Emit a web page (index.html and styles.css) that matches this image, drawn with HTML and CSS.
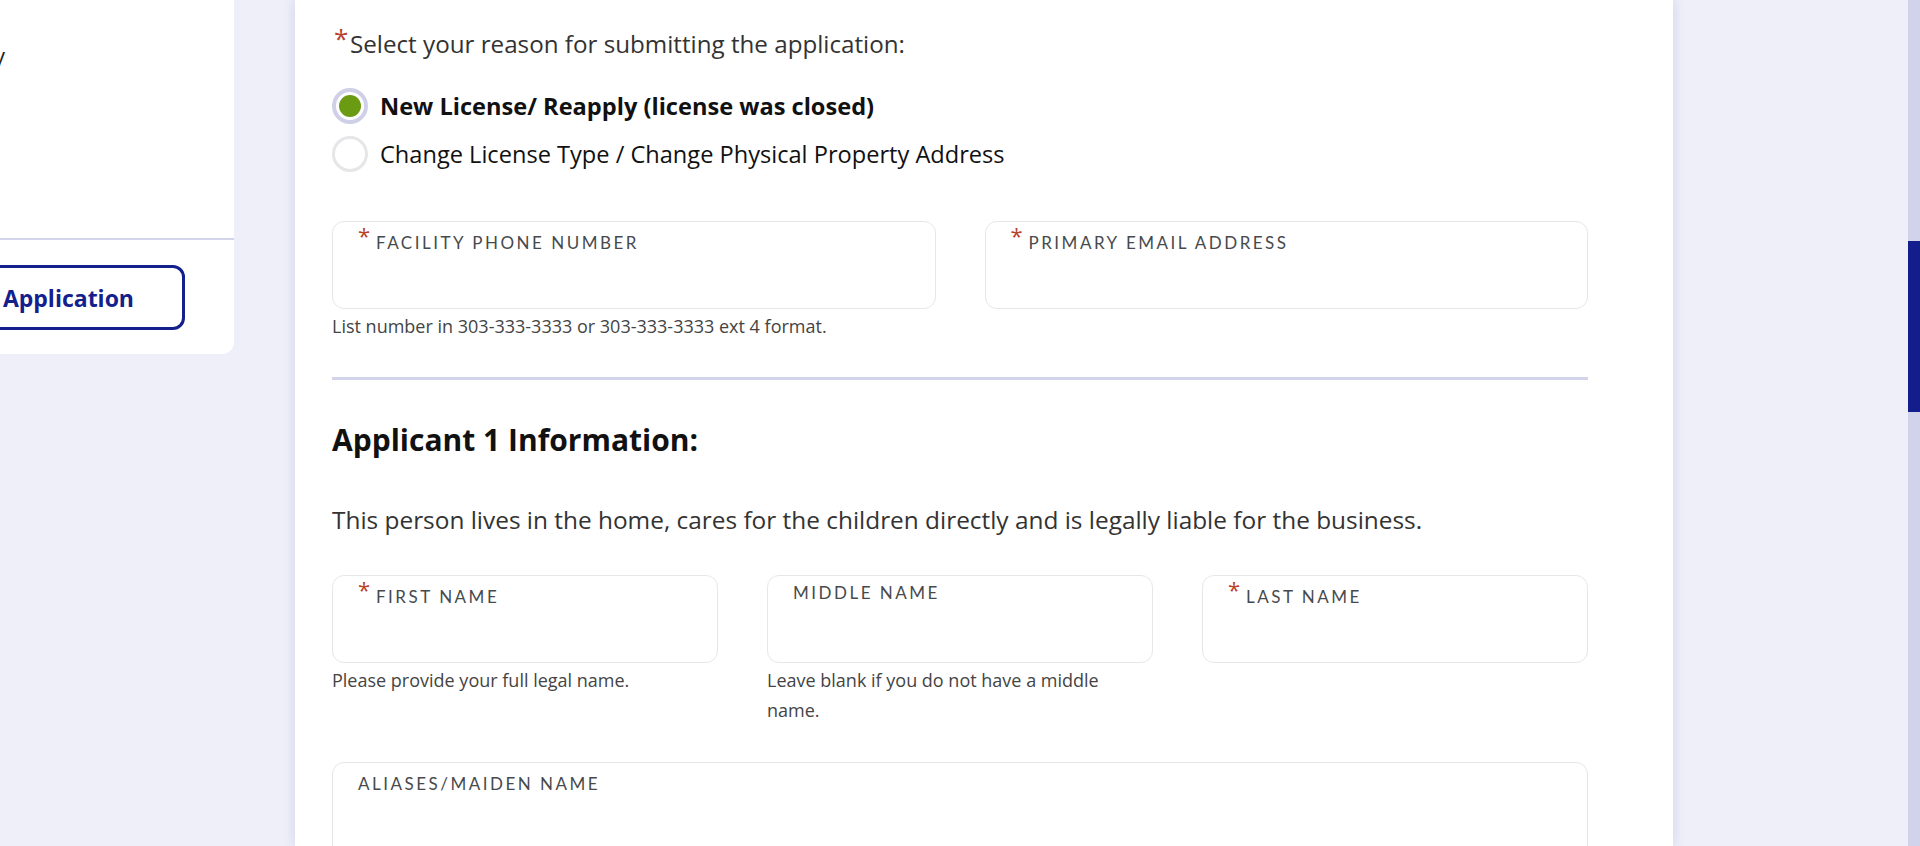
FILE: index.html
```html
<!DOCTYPE html>
<html lang="en">
<head>
<meta charset="utf-8">
<title>Application</title>
<link rel="stylesheet" href="styles.css">
</head>
<body>
<div class="page">
  <aside class="sidebar">
    <div class="side-nav">
      <div class="side-item"><span>Facility</span></div>
    </div>
    <div class="side-actions">
      <div class="btn-wrap"><button class="btn-outline" type="button">Start New Application</button></div>
    </div>
  </aside>

  <main class="card">
    <div class="question"><span class="ast">*</span><span>Select your reason for submitting the application:</span></div>
    <div class="radios">
      <label class="radio-row selected"><span class="radio"><span class="dot"></span></span><span class="rlabel">New License/ Reapply (license was closed)</span></label>
      <label class="radio-row"><span class="radio"></span><span class="rlabel">Change License Type / Change Physical Property Address</span></label>
    </div>

    <div class="row two">
      <div class="col">
        <div class="field"><div class="flabel req"><span class="ast">*</span><span class="ftext">Facility Phone Number</span></div></div>
        <div class="help">List number in 303-333-3333 or 303-333-3333 ext 4 format.</div>
      </div>
      <div class="col">
        <div class="field"><div class="flabel req"><span class="ast">*</span><span class="ftext">Primary Email Address</span></div></div>
      </div>
    </div>

    <hr class="divider">

    <h2 class="heading">Applicant 1 Information:</h2>
    <p class="intro">This person lives in the home, cares for the children directly and is legally liable for the business.</p>

    <div class="row three">
      <div class="col">
        <div class="field"><div class="flabel req"><span class="ast">*</span><span class="ftext">First Name</span></div></div>
        <div class="help">Please provide your full legal name.</div>
      </div>
      <div class="col">
        <div class="field"><div class="flabel"><span class="ftext">Middle Name</span></div></div>
        <div class="help">Leave blank if you do not have a middle name.</div>
      </div>
      <div class="col">
        <div class="field"><div class="flabel req"><span class="ast">*</span><span class="ftext">Last Name</span></div></div>
      </div>
    </div>

    <div class="field wide"><div class="flabel"><span class="ftext">Aliases/Maiden Name</span></div></div>
  </main>

  <div class="spacer"></div>
  <div class="scrollbar"><div class="thumb"></div></div>
</div>
</body>
</html>
```

FILE: styles.css
```css
html, body {
  margin: 0;
  padding: 0;
  height: 846px;
  overflow: hidden;
}
body {
  background: #eeeff9;
  font-family: "Open Sans", "Lato", sans-serif;
  color: #333;
}
.page {
  display: flex;
  align-items: stretch;
  height: 846px;
}

/* sidebar */
.sidebar {
  width: 234px;
  flex-shrink: 0;
  align-self: flex-start;
  height: 354px;
  background: #fff;
  border-radius: 0 0 12px 0;
  overflow: hidden;
  display: flex;
  flex-direction: column;
}
.side-nav {
  height: 238px;
  border-bottom: 2px solid #d3d4ea;
}
.side-item {
  width: 5px;
  display: flex;
  justify-content: flex-end;
  margin-top: 40px;
  font-size: 22px;
  line-height: 30px;
  white-space: nowrap;
  color: #222;
}
.side-item span { flex-shrink: 0; }
.side-actions {
  padding-top: 25px;
}
.btn-wrap {
  width: 185px;
  display: flex;
  justify-content: flex-end;
}
.btn-outline {
  flex-shrink: 0;
  height: 65px;
  box-sizing: border-box;
  border: 3px solid #14208c;
  border-radius: 12px;
  background: #fff;
  color: #14208c;
  font-family: "Open Sans", "Lato", sans-serif;
  font-weight: 700;
  font-size: 23px;
  padding: 0 48px 0 30px;
  white-space: nowrap;
}

/* main card */
.card {
  width: 1378px;
  flex-shrink: 0;
  margin-left: 61px;
  box-sizing: border-box;
  background: #fff;
  box-shadow: 0 0 12px rgba(60, 64, 140, 0.16);
  padding: 29px 85px 0 37px;
}
.ast {
  color: #b8412c;
  display: inline-block;
  flex-shrink: 0;
}
.question {
  display: flex;
  align-items: flex-start;
  font-size: 24.2px;
  line-height: 30px;
  color: #333;
  padding-left: 2px;
}
.question .ast {
  font-size: 26px;
  line-height: 26px;
  margin-top: -4px;
  width: 16px;
}

.radios {
  margin-top: 29px;
  display: flex;
  flex-direction: column;
  gap: 12px;
}
.radio-row {
  display: flex;
  align-items: center;
  height: 36px;
  gap: 12px;
  font-size: 23.6px;
  color: #111;
}
.radio-row.selected .rlabel { font-weight: 700; }
.radio {
  width: 36px;
  height: 36px;
  box-sizing: border-box;
  border-radius: 50%;
  border: 3px solid #e6e6e8;
  background: #fff;
  display: flex;
  align-items: center;
  justify-content: center;
  flex-shrink: 0;
}
.selected .radio {
  border: 4px solid #cfd0e8;
}
.dot {
  width: 22px;
  height: 22px;
  border-radius: 50%;
  background: #6b9b12;
}

.row {
  display: grid;
  column-gap: 49px;
}
.row.two {
  grid-template-columns: 1fr 1fr;
  margin-top: 49px;
}
.row.three {
  grid-template-columns: 1fr 1fr 1fr;
  margin-top: 40px;
}
.row.three .help {
  padding-right: 16px;
}
.field {
  height: 88px;
  box-sizing: border-box;
  border: 1px solid #e7e7ea;
  border-radius: 12px;
  padding: 7px 20px 0 25px;
}
.flabel {
  display: flex;
  align-items: flex-start;
  font-family: "Lato", "Open Sans", sans-serif;
  font-size: 17px;
  line-height: 20px;
  letter-spacing: 2.5px;
  text-transform: uppercase;
  color: #474a4d;
}
.flabel .ast {
  font-family: "Open Sans", sans-serif;
  font-size: 22px;
  line-height: 22px;
  margin-top: -5px;
  width: 18px;
  letter-spacing: 0;
}
.flabel.req .ftext {
  margin-top: 4px;
}
.field.wide {
  margin-top: 37px;
  height: 120px;
  padding-top: 11px;
}
.help {
  margin-top: 2px;
  font-size: 18px;
  line-height: 30px;
  color: #444;
}

.divider {
  margin: 36px 0 0;
  border: 0;
  height: 3px;
  background: #d2d4ea;
}
.heading {
  margin: 42px 0 0;
  font-size: 30px;
  line-height: 36px;
  font-weight: 700;
  color: #111;
}
.intro {
  margin: 47px 0 0;
  font-size: 24.4px;
  line-height: 30px;
  color: #333;
}

.spacer { flex: 1; }
.scrollbar {
  width: 12px;
  flex-shrink: 0;
  background: #d0d3e9;
}
.thumb {
  margin-top: 241px;
  height: 171px;
  background: #131e8c;
}
```
